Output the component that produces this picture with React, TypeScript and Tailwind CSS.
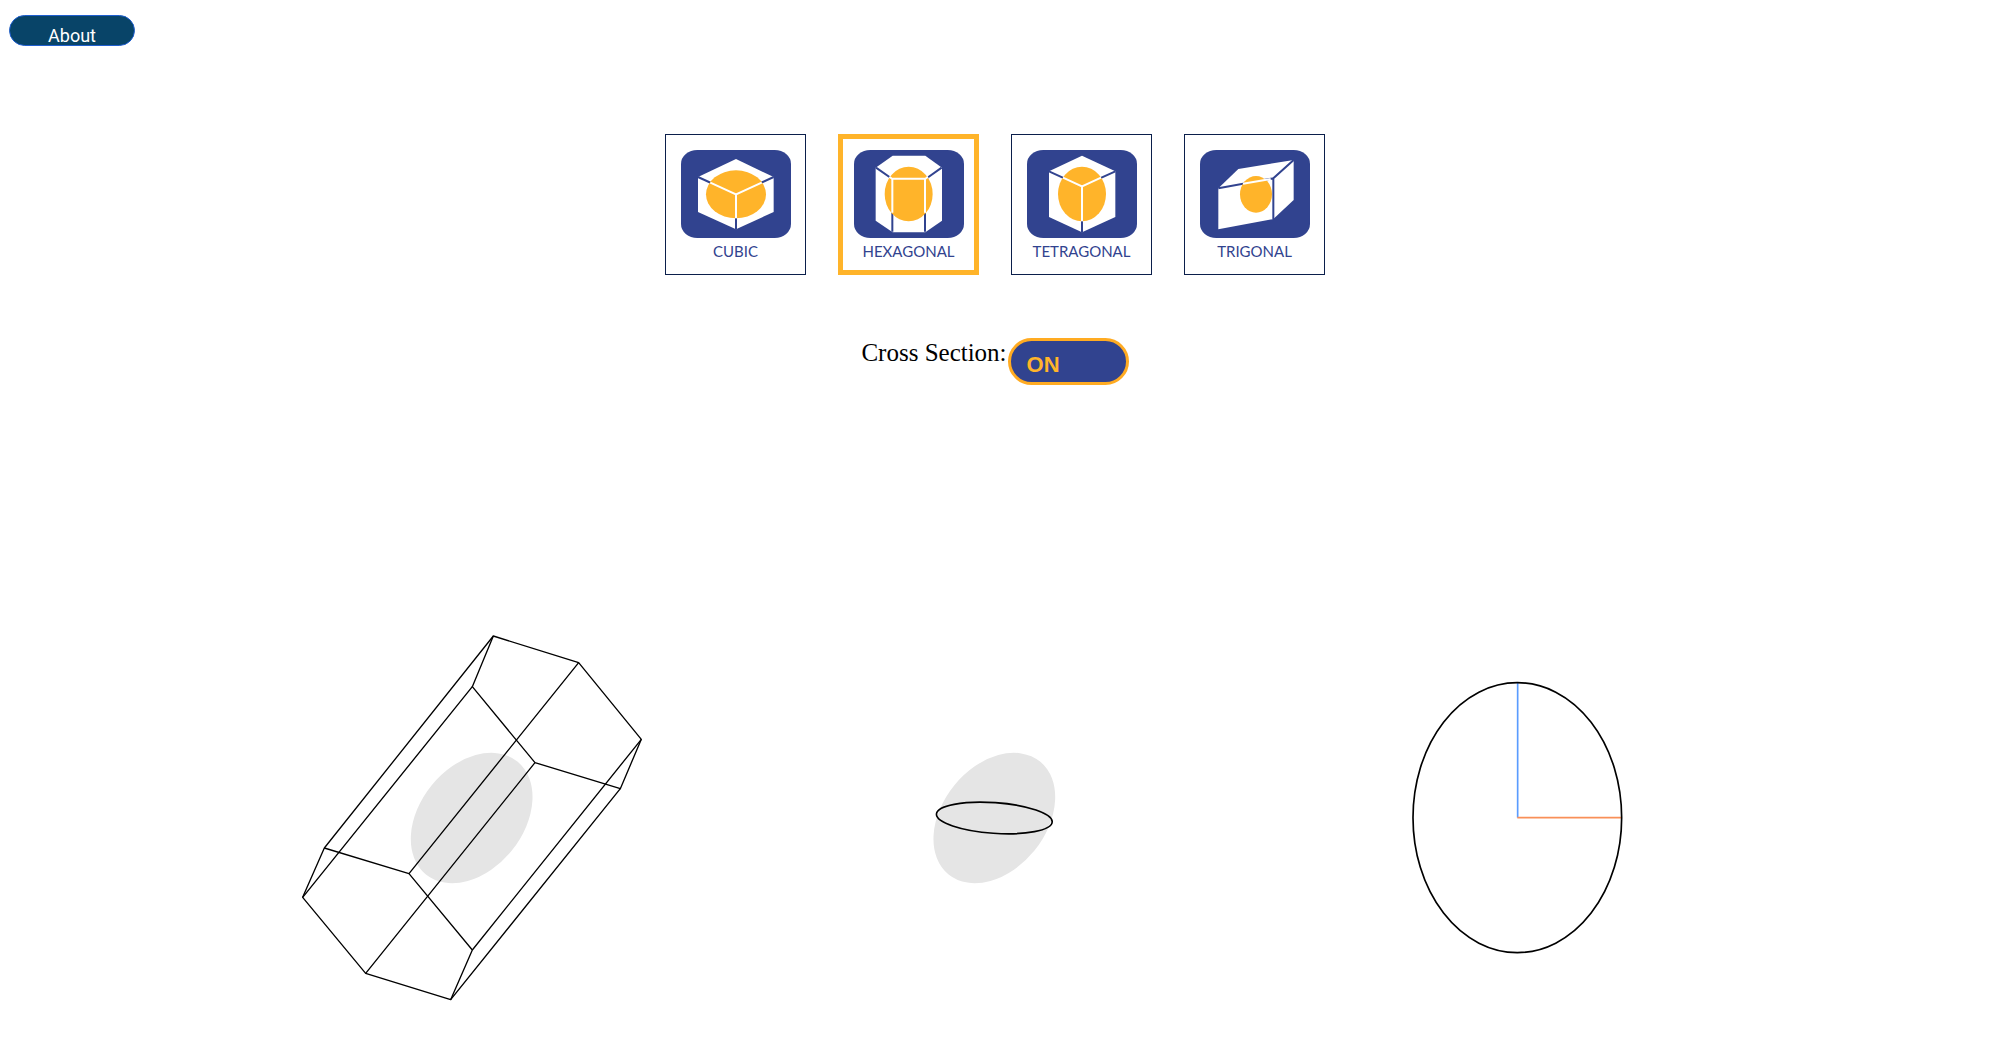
import { useState, type ReactNode } from "react";

const BLUE = "#31438f";
const GOLD = "#ffb42a";

function Badge({ children }: { children: ReactNode }) {
  return (
    <svg viewBox="0 0 330 264" className="h-[88px] w-[110px]" aria-hidden="true">
      <rect width="330" height="264" rx="49" ry="42" fill={BLUE} />
      {children}
    </svg>
  );
}

function CubicIcon() {
  return (
    <Badge>
      <path d="M165 27 L278 81 V186 L165 238 L51 186 V81 Z" fill="#fff" />
      <path d="M51 81 L165 133 L278 81 M165 133 V238" fill="none" stroke={BLUE} strokeWidth="6" />
      <ellipse cx="165" cy="133" rx="90" ry="72" fill={GOLD} />
      <path d="M88 98 L165 133 L242 98 M165 133 V205" fill="none" stroke="#fff" strokeWidth="6" />
    </Badge>
  );
}

function HexagonalIcon() {
  return (
    <Badge>
      <path d="M116 17 H214 L264 53 V212 L214 247 H116 L65 212 V53 Z" fill="#fff" />
      <path d="M66 53 L115 87 M263 53 L215 87 M115 87 V245 M213 87 V245" fill="none" stroke={BLUE} strokeWidth="6" />
      <ellipse cx="164" cy="132" rx="72" ry="82" fill={GOLD} />
      <path d="M106 80 L115 87 M222 80 L213 87 M115 188 V86 H213 V188" fill="none" stroke="#fff" strokeWidth="6" />
    </Badge>
  );
}

function TetragonalIcon() {
  return (
    <Badge>
      <path d="M165 17 L265 64 V201 L165 247 L66 201 V64 Z" fill="#fff" />
      <path d="M66 64 L165 109 L265 64 M165 109 V247" fill="none" stroke={BLUE} strokeWidth="6" />
      <ellipse cx="165" cy="132" rx="72" ry="82" fill={GOLD} />
      <path d="M108 83 L165 109 L222 83 M165 109 V214" fill="none" stroke="#fff" strokeWidth="6" />
    </Badge>
  );
}

function TrigonalIcon() {
  return (
    <Badge>
      <path d="M55 115 L115 57 L281 30 V150 L220 207 L55 238 Z" fill="#fff" />
      <path d="M55 115 L220 85 L281 30 M220 85 V208" fill="none" stroke={BLUE} strokeWidth="6" />
      <ellipse cx="168" cy="133" rx="48" ry="55" fill={GOLD} />
      <path d="M129 101 L212 87" stroke="#fff" strokeWidth="6" />
    </Badge>
  );
}

const systems = [
  { name: "CUBIC", Icon: CubicIcon },
  { name: "HEXAGONAL", Icon: HexagonalIcon },
  { name: "TETRAGONAL", Icon: TetragonalIcon },
  { name: "TRIGONAL", Icon: TrigonalIcon },
];

function CrystalView() {
  return (
    <svg viewBox="-237 -189 1569 1440" className="w-1/3" role="img" aria-label="Crystal with indicatrix">
      <ellipse cx="545" cy="594" rx="218" ry="155" transform="rotate(-51 545 594)" fill="#e5e5e5" />
      <g fill="none" stroke="#000" strokeWidth="4" strokeLinejoin="round">
        <path d="M610 48 L866 128 L1054 358 L991 506 L735 428 L547 200 Z" />
        <path d="M103 684 L357 761 L547 990 L482 1139 L227 1060 L38 832 Z" />
        <path d="M610 48 L103 684 M866 128 L357 761 M1054 358 L547 990 M991 506 L482 1139 M735 428 L227 1060 M547 200 L38 832" />
      </g>
    </svg>
  );
}

function IndicatrixView() {
  return (
    <svg viewBox="-558 -549 1569 1440" className="w-1/3" role="img" aria-label="Indicatrix with cross section">
      <ellipse cx="226" cy="234" rx="218" ry="155" transform="rotate(-51 226 234)" fill="#e5e5e5" />
      <ellipse cx="226" cy="234" rx="174" ry="46" transform="rotate(4 226 234)" fill="none" stroke="#000" strokeWidth="5" />
    </svg>
  );
}

function SectionView() {
  return (
    <svg viewBox="-429 -339 1569 1440" className="w-1/3" role="img" aria-label="Cross section axes">
      <path d="M356 443 V39" stroke="#5a9cff" strokeWidth="5" />
      <path d="M355 443 H667" stroke="#f99058" strokeWidth="5" />
      <ellipse cx="355" cy="443" rx="313" ry="405" fill="none" stroke="#000" strokeWidth="5" />
    </svg>
  );
}

export default function App() {
  const [selected, setSelected] = useState("HEXAGONAL");
  const [on, setOn] = useState(true);

  return (
    <div className="bg-white pr-[10px] text-black">
      <header className="px-[9px] pt-[15px]">
        <button
          type="button"
          className="flex h-[31px] w-[126px] items-end justify-center rounded-full border border-[#1f5fd0] bg-[#084468] font-[Roboto,sans-serif] text-[18px] leading-[18px] text-white"
        >
          About
        </button>
      </header>

      <main className="flex flex-col items-center">
        <div className="mt-[88px] flex gap-8">
          {systems.map(({ name, Icon }) => (
            <button
              key={name}
              type="button"
              aria-pressed={selected === name}
              onClick={() => setSelected(name)}
              className={`flex size-[141px] flex-col items-center justify-center gap-[5px] ${
                selected === name ? "border-5 border-[#ffb42a]" : "border border-[#0b1f4b]"
              }`}
            >
              <Icon />
              <span className="font-[Lato,sans-serif] text-[15px] leading-[16px] text-[#31438f]">{name}</span>
            </button>
          ))}
        </div>

        <div className="mt-[63px] flex items-start gap-px">
          <label htmlFor="cross-section" className="font-['Liberation_Serif',serif] text-[25px] leading-[30px]">
            Cross Section:
          </label>
          <button
            id="cross-section"
            type="button"
            aria-pressed={on}
            onClick={() => setOn(!on)}
            className="h-[47px] w-[121px] rounded-full border-[3px] border-[#ffab22] bg-[#31438f] px-4 pt-[6px] text-left font-['Liberation_Sans',sans-serif] text-[22px] leading-[30px] font-bold text-[#ffb42a]"
          >
            {on ? "ON" : "OFF"}
          </button>
        </div>

        <div className="mt-[172px] flex w-full max-w-[1569px]">
          <CrystalView />
          <IndicatrixView />
          <SectionView />
        </div>
      </main>
    </div>
  );
}
